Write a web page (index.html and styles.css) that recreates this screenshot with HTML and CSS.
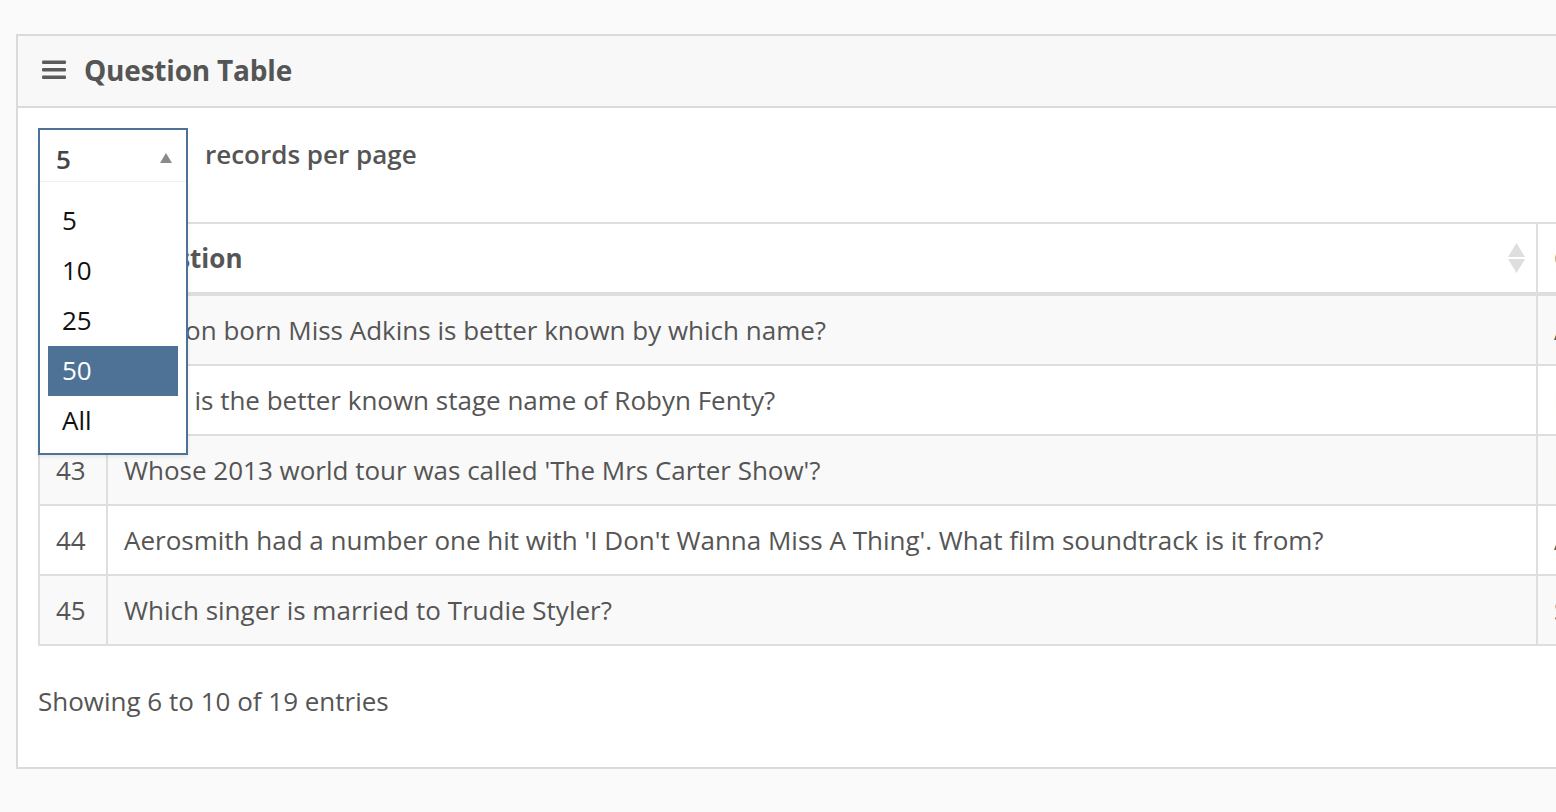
FILE: index.html
```html
<!DOCTYPE html>
<html lang="en">
<head>
<meta charset="utf-8">
<title>Question Table</title>
<link rel="stylesheet" href="styles.css">
</head>
<body>
<div class="panel">
  <div class="panel-header">
    <svg class="menu-icon" width="24" height="20" viewBox="0 0 24 20" aria-hidden="true">
      <rect x="0" y="0.5" width="24" height="3.5" rx="1.2" fill="#5b5b5b"/>
      <rect x="0" y="8" width="24" height="3.5" rx="1.2" fill="#5b5b5b"/>
      <rect x="0" y="15.5" width="24" height="3.5" rx="1.2" fill="#5b5b5b"/>
    </svg>
    <h2 class="panel-title">Question Table</h2>
  </div>
  <div class="panel-body">
    <div class="toolbar">
      <div class="select">
        <span class="select-value">5</span>
        <svg class="select-arrow" width="12" height="10" viewBox="0 0 12 10" aria-hidden="true"><polygon points="6,0 12,10 0,10" fill="#8a8a8a"/></svg>
        <ul class="select-menu">
          <li class="option">5</li>
          <li class="option">10</li>
          <li class="option">25</li>
          <li class="option selected">50</li>
          <li class="option">All</li>
        </ul>
      </div>
      <span class="toolbar-label">records per page</span>
    </div>
    <table class="data-table">
      <colgroup>
        <col class="col-id">
        <col class="col-q">
        <col class="col-a">
      </colgroup>
      <thead>
        <tr>
          <th>#</th>
          <th>
            <div class="th-inner"><span>Question</span>
              <svg class="sort" width="17" height="30" viewBox="0 0 17 30" aria-hidden="true">
                <polygon points="8.5,0 17,14 0,14" fill="#dedede"/>
                <polygon points="0,16 17,16 8.5,30" fill="#dedede"/>
              </svg>
            </div>
          </th>
          <th>Correct Answer</th>
        </tr>
      </thead>
      <tbody>
        <tr><td>41</td><td>London born Miss Adkins is better known by which name?</td><td>Adele</td></tr>
        <tr><td>42</td><td>What is the better known stage name of Robyn Fenty?</td><td>Rihanna</td></tr>
        <tr><td>43</td><td>Whose 2013 world tour was called 'The Mrs Carter Show'?</td><td>Beyonce</td></tr>
        <tr><td>44</td><td>Aerosmith had a number one hit with 'I Don't Wanna Miss A Thing'. What film soundtrack is it from?</td><td>Armageddon</td></tr>
        <tr><td>45</td><td>Which singer is married to Trudie Styler?</td><td>Sting</td></tr>
      </tbody>
    </table>
    <div class="info">Showing 6 to 10 of 19 entries</div>
  </div>
</div>
</body>
</html>
```

FILE: styles.css
```css
html, body {
  margin: 0;
  padding: 0;
}
body {
  background: #fafafa;
  font-family: "Open Sans", "Noto Sans", "Liberation Sans", sans-serif;
  color: #555;
  overflow: hidden;
  width: 1556px;
  height: 812px;
}
.panel {
  margin: 34px 0 0 16px;
  width: 2000px;
  border: 2px solid #dadada;
  background: #fff;
}
.panel-header {
  height: 70px;
  background: #f8f8f8;
  border-bottom: 2px solid #dadada;
  display: flex;
  align-items: center;
  padding-left: 24px;
  gap: 18px;
}
.menu-icon {
  display: block;
  margin-top: -2px;
}
.panel-title {
  margin: -3px 0 0 0;
  font-size: 28px;
  font-weight: 700;
  color: #555;
  letter-spacing: -0.2px;
}
.panel-body {
  padding: 20px 20px 49px 20px;
}
.toolbar {
  display: flex;
  align-items: flex-start;
  gap: 17px;
  height: 54px;
  position: relative;
  z-index: 2;
}
.select {
  position: relative;
  box-sizing: border-box;
  width: 150px;
  height: 54px;
  border: 2px solid #4e7296;
  border-bottom: none;
  background: #fff;
  display: flex;
  align-items: center;
  padding-left: 16px;
}
.select::after {
  content: "";
  position: absolute;
  left: 0;
  right: 0;
  bottom: 0;
  height: 1px;
  background: #f1f1f1;
}
.select-value {
  font-size: 26px;
  font-weight: 600;
  color: #444;
  margin-top: 5px;
}
.select-arrow {
  position: absolute;
  right: 14px;
  top: 23px;
}
.select-menu {
  position: absolute;
  top: 52px;
  left: -2px;
  width: 150px;
  box-sizing: border-box;
  margin: 0;
  list-style: none;
  padding: 14px 8px 7px 8px;
  background: #fff;
  border: 2px solid #4e7296;
  border-top: none;
  box-shadow: 0 2px 4px rgba(0,0,0,0.08);
}
.option {
  height: 50px;
  line-height: 48px;
  padding-left: 14px;
  font-size: 26px;
  color: #111;
}
.option.selected {
  background: #4e7296;
  color: #fff;
}
.toolbar-label {
  font-size: 26px;
  font-weight: 600;
  color: #555;
  line-height: 52px;
}
.data-table {
  margin-top: 40px;
  table-layout: fixed;
  width: 1836px;
  border-collapse: separate;
  border-spacing: 0;
  border-top: 2px solid #dedede;
  border-left: 2px solid #dedede;
  font-size: 26px;
  color: #555;
}
.col-id {
  width: 68px;
}
.col-q {
  width: 1430px;
}
.col-a {
  width: 336px;
}
.data-table th,
.data-table td {
  height: 68px;
  padding: 0 16px;
  border-right: 2px solid #dedede;
  border-bottom: 2px solid #dedede;
  text-align: left;
  vertical-align: middle;
  white-space: nowrap;
  overflow: hidden;
}
.data-table th {
  font-weight: 700;
  font-size: 26px;
  height: 68px;
  border-bottom-width: 4px;
}
.data-table tbody tr:nth-child(odd) td {
  background: #f9f9f9;
}
.th-inner {
  display: flex;
  align-items: center;
  justify-content: space-between;
}
.sort {
  display: block;
  margin-right: -5px;
}
.info {
  margin-top: 38px;
  font-size: 26px;
  line-height: 34px;
  color: #555;
}
```
